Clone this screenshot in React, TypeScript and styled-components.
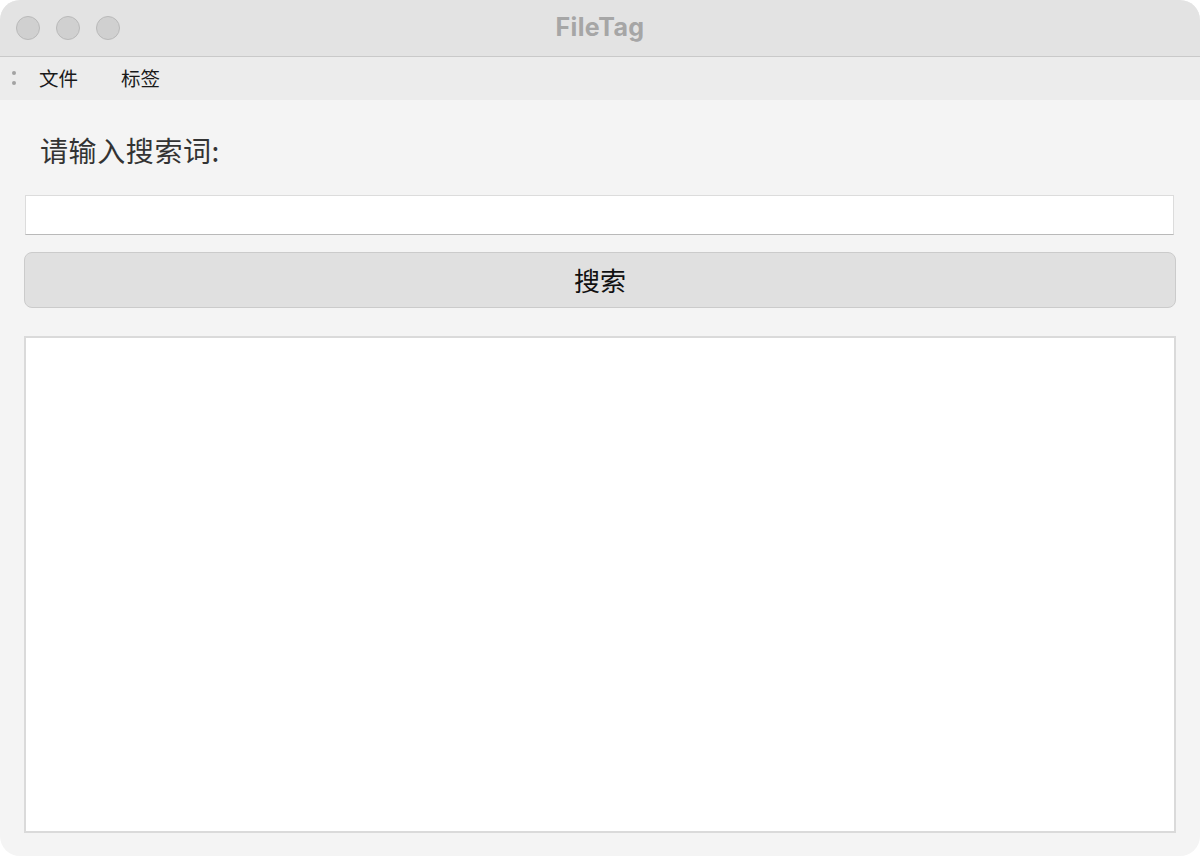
import styled, { createGlobalStyle } from "styled-components";

const GlobalStyle = createGlobalStyle`
  html, body {
    margin: 0;
    padding: 0;
    background: #ffffff;
  }
  * {
    box-sizing: border-box;
  }
`;

const menus = ["文件", "标签"];

export default function App() {
  return (
    <>
      <GlobalStyle />
      <Window>
        <TitleBar>
          <Lights>
            <Light />
            <Light />
            <Light />
          </Lights>
          <Title>FileTag</Title>
        </TitleBar>

        <MenuBar>
          <Grip>
            <Dot />
            <Dot />
          </Grip>
          {menus.map((m) => (
            <MenuItem key={m}>{m}</MenuItem>
          ))}
        </MenuBar>

        <Body>
          <Label>请输入搜索词:</Label>
          <SearchInput />
          <SearchButton>搜索</SearchButton>
          <Results />
        </Body>
      </Window>
    </>
  );
}

const Window = styled.div`
  width: 1200px;
  height: 856px;
  border-radius: 20px;
  overflow: hidden;
  background: #f4f4f4;
  display: flex;
  flex-direction: column;
  font-family: "Noto Sans CJK SC", "Noto Sans", sans-serif;
`;

const TitleBar = styled.div`
  position: relative;
  height: 57px;
  flex-shrink: 0;
  background: #e3e3e3;
  border-bottom: 1px solid #c9c9c9;
  display: flex;
  align-items: center;
  justify-content: center;
`;

const Lights = styled.div`
  position: absolute;
  left: 16px;
  top: 16px;
  display: flex;
  gap: 16px;
`;

const Light = styled.div`
  width: 24px;
  height: 24px;
  border-radius: 50%;
  background: #d0d0d0;
  border: 1px solid #b9b9b9;
`;

const Title = styled.div`
  font-family: "Inter", "Liberation Sans", sans-serif;
  font-weight: 700;
  font-size: 25px;
  color: #a6a6a6;
  letter-spacing: 0.4px;
  margin-top: -2px;
`;

const MenuBar = styled.div`
  height: 43px;
  flex-shrink: 0;
  background: #ececec;
  display: flex;
  align-items: center;
  padding-left: 12px;
`;

const Grip = styled.div`
  display: flex;
  flex-direction: column;
  gap: 6px;
  margin-right: 23px;
  margin-top: -2px;
`;

const Dot = styled.div`
  width: 4px;
  height: 4px;
  border-radius: 50%;
  background: #a3a3a3;
`;

const MenuItem = styled.div`
  font-size: 19.5px;
  color: #1a1a1a;
  margin-right: 43px;
  margin-top: -3px;
`;

const Body = styled.div`
  flex: 1;
  display: flex;
  flex-direction: column;
  padding: 30px 24px 24px 24px;
`;

const Label = styled.div`
  font-size: 28px;
  color: #333333;
  padding-left: 16px;
  line-height: 40px;
  margin-bottom: 25px;
  letter-spacing: 0.6px;
`;

const SearchInput = styled.input`
  display: block;
  height: 40px;
  margin: 0 2px 0 1px;
  background: #ffffff;
  border: 1px solid #dcdcdc;
  border-bottom: 1px solid #b9b9b9;
  outline: none;
  font-size: 18px;
`;

const SearchButton = styled.button`
  height: 56px;
  margin-top: 17px;
  background: #e0e0e0;
  border: 1px solid #cbcbcb;
  border-radius: 8px;
  font-family: "Noto Sans CJK SC", "Noto Sans", sans-serif;
  font-size: 26px;
  color: #111111;
  display: flex;
  align-items: center;
  justify-content: center;
  padding-bottom: 3px;
`;

const Results = styled.div`
  margin-top: 28px;
  height: 497px;
  background: #ffffff;
  border: 2px solid #dadada;
`;
